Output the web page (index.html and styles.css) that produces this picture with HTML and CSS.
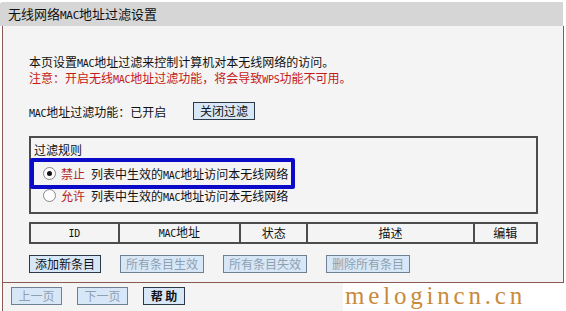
FILE: index.html
```html
<!DOCTYPE html>
<html>
<head>
<meta charset="utf-8">
<link rel="stylesheet" href="styles.css">
</head>
<body>
<div class="page">
  <div class="header">无线网络<span class="mac">MAC</span>地址过滤设置</div>
  <div class="panel">
    <div class="content">
      <p class="line">本页设置<span class="mac">MAC</span>地址过滤来控制计算机对本无线网络的访问。</p>
      <p class="line warn">注意：开启无线<span class="mac">MAC</span>地址过滤功能，将会导致<span class="mac">WPS</span>功能不可用。</p>
      <div class="status">
        <span class="status-label"><span class="mac">MAC</span>地址过滤功能：已开启</span>
        <button class="btn">关闭过滤</button>
      </div>
      <div class="rules">
        <div class="legend">过滤规则</div>
        <div class="highlight">
          <label class="radio-row"><span class="radio checked"></span><span class="red">禁止</span><span class="desc">列表中生效的<span class="mac">MAC</span>地址访问本无线网络</span></label>
        </div>
        <label class="radio-row second"><span class="radio"></span><span class="red">允许</span><span class="desc">列表中生效的<span class="mac">MAC</span>地址访问本无线网络</span></label>
      </div>
      <table class="list">
        <tr>
          <th class="c-id"><span class="mac">ID</span></th>
          <th class="c-mac"><span class="mac">MAC</span>地址</th>
          <th class="c-st">状态</th>
          <th class="c-desc">描述</th>
          <th class="c-edit">编辑</th>
        </tr>
      </table>
      <div class="actions">
        <button class="btn">添加新条目</button>
        <button class="btn disabled">所有条目生效</button>
        <button class="btn disabled">所有条目失效</button>
        <button class="btn disabled">删除所有条目</button>
      </div>
    </div>
    <div class="footer">
      <button class="btn disabled pg">上一页</button>
      <button class="btn disabled pg">下一页</button>
      <button class="btn help">帮 助</button>
    </div>
  </div>
  <div class="watermark">melogincn.cn</div>
</div>
</body>
</html>
```

FILE: styles.css
```css
html, body {
  margin: 0;
  padding: 0;
  background: #ffffff;
}
body {
  font-family: "Noto Sans CJK SC", "Liberation Sans", sans-serif;
  font-size: 12px;
  color: #111;
}
.page {
  position: relative;
  width: 566px;
  height: 311px;
  overflow: hidden;
}
.mac {
  font-family: "DejaVu Sans Mono", "Liberation Mono", monospace;
  font-size: 10px;
  letter-spacing: -0.3px;
}
.header {
  margin: 2px 3px 0 0;
  height: 24px;
  line-height: 24px;
  background: #d6d6d6;
  border-radius: 3px 0 0 0;
  padding-left: 8px;
  font-size: 13px;
  color: #111;
}
.header .mac {
  font-size: 11px;
}
.panel {
  margin-left: 2px;
  width: 560px;
  background: #f4f4f4;
  border-left: 1px solid #8a5a50;
  border-right: 1px solid #8a5a50;
  height: 285px;
}
.content {
  padding: 28px 0 0 26px;
  height: 228px;
}
.line {
  margin: 0;
  height: 16px;
  line-height: 16px;
  white-space: nowrap;
}
.warn {
  color: #c41a1a;
}
.status {
  margin-top: 16px;
  height: 18px;
  display: flex;
  align-items: center;
}
.status-label {
  width: 164px;
  white-space: nowrap;
}
.btn {
  font-family: "Noto Sans CJK SC", "Liberation Sans", sans-serif;
  font-size: 12px;
  height: 18px;
  line-height: 16px;
  padding: 0 6px;
  background: #d8e7f7;
  border: 1px solid #2c3a48;
  color: #111;
  border-radius: 0;
  margin: 0;
  white-space: nowrap;
}
.btn.disabled {
  color: #8fa0b0;
  border-color: #6f8090;
}
.rules {
  margin-top: 16px;
  width: 505px;
  height: 74px;
  border: 2px solid #4c4c4c;
  position: relative;
}
.legend {
  height: 16px;
  line-height: 16px;
  padding: 4px 0 0 3px;
}
.highlight {
  position: absolute;
  left: -1px;
  top: 20px;
  width: 257px;
  height: 23px;
  border: 4px solid #0a0ac8;
  border-radius: 2px;
}
.radio-row {
  display: flex;
  align-items: center;
  height: 23px;
  padding-left: 9px;
  white-space: nowrap;
}
.second {
  position: absolute;
  left: 3px;
  top: 48px;
  height: 18px;
}
.radio {
  flex-shrink: 0;
  border: 1px solid #888;
  border-radius: 50%;
  background: #fff;
  margin-right: 5px;
  position: relative;
  box-sizing: border-box;
  width: 13px;
  height: 13px;
}
.radio.checked::after {
  content: "";
  position: absolute;
  left: 3px;
  top: 3px;
  width: 5px;
  height: 5px;
  border-radius: 50%;
  background: #111;
}
.red {
  color: #b81c1c;
  margin-right: 6px;
  flex-shrink: 0;
}
.desc {
  flex-shrink: 0;
}
.list {
  margin-top: 8px;
  border-collapse: collapse;
  width: 509px;
}
.list th {
  border: 2px solid #4c4c4c;
  height: 16px;
  padding: 0;
  font-weight: normal;
  font-size: 12px;
  line-height: 16px;
  text-align: center;
  white-space: nowrap;
}
.c-id { width: 88px; }
.c-mac { width: 121px; }
.c-st { width: 66px; }
.c-desc { width: 167px; }
.c-edit { width: 62px; }
.actions {
  margin-top: 11px;
  display: flex;
  gap: 19px;
}
.actions .btn {
  padding: 0 5px;
}
.footer {
  border-top: 1px solid #8a5a50;
  padding: 4px 0 0 8px;
  display: flex;
  gap: 15px;
}
.pg {
  width: 51px;
}
.help {
  width: 42px;
  font-weight: bold;
}
.watermark {
  position: absolute;
  left: 343px;
  top: 283px;
  width: 223px;
  height: 28px;
  background: #ffffff;
  font-family: "Liberation Serif", serif;
  font-size: 25px;
  letter-spacing: 3.8px;
  line-height: 26px;
  color: #c98a3c;
  padding-left: 2px;
  box-sizing: border-box;
  white-space: nowrap;
}
```
